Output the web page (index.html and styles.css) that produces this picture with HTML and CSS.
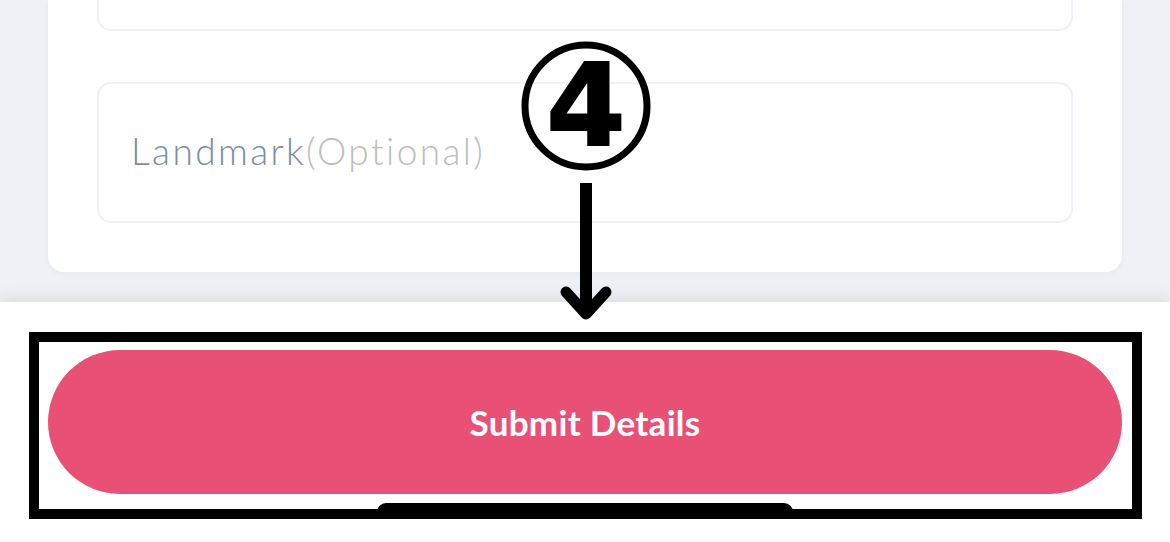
FILE: index.html
```html
<!DOCTYPE html>
<html lang="en">
<head>
    <meta charset="UTF-8">
    <meta name="viewport" content="width=device-width, initial-scale=1.0">
    <title>Address Details</title>
    <link rel="stylesheet" href="styles.css">
</head>
<body>

    <div class="form-area">
        <div class="card">
            <div class="field field-cut"></div>
            <div class="field">
                <span class="placeholder">Landmark<span class="optional">(Optional)</span></span>
            </div>
        </div>
    </div>

    <div class="bottom-sheet">
        <button class="submit-btn" type="button">Submit Details</button>
        <div class="home-indicator"></div>
    </div>

    <!-- Tutorial annotation (step 4) -->
    <div class="highlight-box"></div>
    <svg class="step-marker" width="140" height="300" viewBox="0 0 140 300">
        <circle cx="70" cy="76" r="61" fill="none" stroke="#000" stroke-width="7"/>
        <text x="70" y="115" text-anchor="middle" class="step-number">4</text>
        <line x1="70" y1="153" x2="70" y2="284" stroke="#000" stroke-width="12"/>
        <polyline points="50,262 70,284 90,262" fill="none" stroke="#000" stroke-width="11" stroke-linecap="round" stroke-linejoin="round"/>
    </svg>

</body>
</html>
```

FILE: styles.css
```css
/* General Styles */
* {
    margin: 0;
    padding: 0;
    box-sizing: border-box;
}

body {
    width: 1170px;
    height: 542px;
    overflow: hidden;
    background-color: #fff;
    font-family: 'Lato', 'Liberation Sans', sans-serif;
    position: relative;
}

/* Grey page area with the form card */
.form-area {
    height: 302px;
    background-color: #eef1f5;
    padding: 0 48px;
}

.card {
    background-color: #fff;
    border-radius: 0 0 16px 16px;
    box-shadow: 0 2px 6px rgba(0, 0, 0, 0.04);
    padding: 0 49px 49px;
    display: flex;
    flex-direction: column;
    gap: 51px;
}

/* Input fields */
.field {
    height: 141px;
    border: 2px solid #eef1f6;
    border-radius: 14px;
    display: flex;
    align-items: center;
    padding-left: 32px;
    padding-bottom: 4px;
}

.field-cut {
    height: 31px;
    border-top: none;
    border-radius: 0 0 14px 14px;
}

.placeholder {
    font-size: 37px;
    font-weight: 300;
    color: #7b8ca8;
    letter-spacing: 2.4px;
}

.optional {
    color: #bdbdbd;
}

/* Bottom sheet with the submit button */
.bottom-sheet {
    height: 240px;
    background-color: #fff;
    box-shadow: 0 -6px 14px rgba(0, 0, 0, 0.07);
    padding: 48px 48px 0;
    position: relative;
}

.submit-btn {
    width: 100%;
    height: 144px;
    border: none;
    border-radius: 72px;
    background-color: #e85175;
    color: #fff;
    font-family: 'Lato', 'Liberation Sans', sans-serif;
    font-size: 35px;
    font-weight: 700;
    letter-spacing: 0.3px;
    cursor: pointer;
}

.home-indicator {
    position: absolute;
    left: 377px;
    top: 201px;
    width: 416px;
    height: 16px;
    background-color: #000;
    border-radius: 9px 9px 0 0;
}

/* Annotation overlay */
.highlight-box {
    position: absolute;
    left: 29px;
    top: 332px;
    width: 1113px;
    height: 187px;
    border: 10px solid #000;
}

.step-marker {
    position: absolute;
    left: 516px;
    top: 30px;
}

.step-number {
    font-family: 'DejaVu Sans', sans-serif;
    font-weight: 700;
    font-size: 114px;
    fill: #000;
    stroke: #000;
    stroke-width: 2px;
}
```
